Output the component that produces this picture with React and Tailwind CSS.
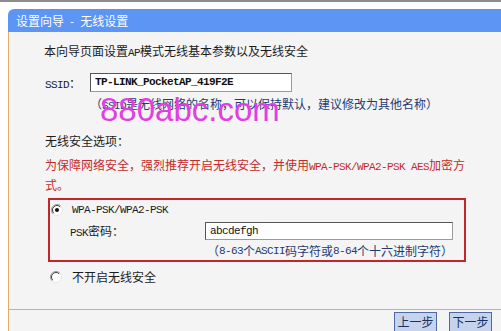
import React from "react";

// ── small helpers ─────────────────────────────────────────────────────────
// latin runs in the old router UI are half-width bitmap glyphs
function M({ children }) {
  return (
    <span className="font-['Liberation_Mono',monospace] text-[11px] leading-none tracking-[-0.6px]">
      {children}
    </span>
  );
}

function Radio({ checked }) {
  return (
    <svg width="12" height="12" viewBox="0 0 12 12" className="shrink-0">
      <circle cx="6" cy="6" r="5.5" fill="#fff" />
      <path d="M9.9 2.1 A5.5 5.5 0 0 0 2.1 9.9" stroke="#9a9a9a" strokeWidth="1" fill="none" />
      <path d="M9.2 2.8 A4.5 4.5 0 0 0 2.8 9.2" stroke="#404040" strokeWidth="1" fill="none" />
      <path d="M2.1 9.9 A5.5 5.5 0 0 0 9.9 2.1" stroke="#e4e4e4" strokeWidth="1" fill="none" />
      {checked && <circle cx="6" cy="6" r="2" fill="#111" />}
    </svg>
  );
}

function Button({ children }) {
  return (
    <button className="flex h-[20px] w-[43px] items-center justify-center border border-[#4d6aa3] bg-[#c6d3ec] text-[12px] text-[#1b2f63]">
      {children}
    </button>
  );
}

// ── page ──────────────────────────────────────────────────────────────────
export default function App() {
  return (
    <div className="relative h-[331px] w-[501px] overflow-hidden border-t-2 border-[#8c8c8c] bg-white pl-2 pt-[7px] font-['Noto_Sans_CJK_SC',sans-serif] text-[12px] text-[#1c1c1c]">
      <div className="flex h-full flex-col">
        {/* title bar */}
        <div className="flex h-[23px] items-center rounded-tl-[6px] bg-[#5c95f3] pl-2 text-[12px] text-white">
          <span>设置向导</span>
          <span className="mx-[6px]">-</span>
          <span>无线设置</span>
        </div>

        {/* body */}
        <div className="flex flex-1 flex-col border-l border-[#dfae68] bg-[#f4f4f4]">
          <div className="flex-1 pl-[35px] leading-[20px]">
            <div className="mt-[9px]">
              本向导页面设置<M>AP</M>模式无线基本参数以及无线安全
            </div>

            <div className="mt-[12px] flex h-[19px] items-center">
              <div className="w-[46px] pl-[1px]">
                <M>SSID</M>：
              </div>
              <div className="flex h-[19px] w-[202px] items-center border border-[#555] border-r-[#9a9a9a] border-b-[#9a9a9a] bg-white pl-[4px] font-bold text-[#111]">
                <M>TP-LINK_PocketAP_419F2E</M>
              </div>
            </div>

            <div className="mt-[2px] pl-[46px] text-[#1f3b72]">
              （<M>SSID</M>是无线网络的名称，可以保持默认，建议修改为其他名称）
            </div>

            <div className="mt-[17px] pl-[1px]">无线安全选项：</div>

            <div className="mt-[4px] pl-[1px] text-[#c42b2b]">
              为保障网络安全，强烈推荐开启无线安全，并使用<M>WPA-PSK/WPA2-PSK AES</M>加密方
              <br />
              式。
            </div>

            {/* wpa box */}
            <div className="ml-[4px] mt-[3px] h-[64px] w-[418px] border-2 border-[#c0262c]">
              <div className="flex h-[20px] items-center gap-[9px] pl-[1px]">
                <Radio checked />
                <M>WPA-PSK/WPA2-PSK</M>
              </div>
              <div className="flex h-[22px] items-center">
                <div className="w-[155px] pl-[20px]">
                  <M>PSK</M>密码：
                </div>
                <div className="flex h-[18px] w-[248px] items-center border border-[#555] border-r-[#9a9a9a] border-b-[#9a9a9a] bg-white pl-[4px] text-[#111]">
                  <M>abcdefgh</M>
                </div>
              </div>
              <div className="flex h-[18px] items-center pl-[157px] text-[#1f3b72]">
                （<M>8-63</M>个<M>ASCII</M>码字符或<M>8-64</M>个十六进制字符）
              </div>
            </div>

            <div className="ml-[6px] mt-[5px] flex h-[20px] items-center gap-[10px]">
              <Radio />
              <span>不开启无线安全</span>
            </div>
          </div>

          {/* footer */}
          <div className="flex h-[22px] justify-end gap-[12px] border-t border-[#dfae68] pr-[9px] pt-[2px]">
            <Button>上一步</Button>
            <Button>下一步</Button>
          </div>
        </div>
      </div>

      {/* watermark */}
      <div className="pointer-events-none absolute left-[100px] top-[91px] font-['Liberation_Sans',sans-serif] text-[33px] leading-none text-[#e23fe0]">
        880abc.com
      </div>
    </div>
  );
}
